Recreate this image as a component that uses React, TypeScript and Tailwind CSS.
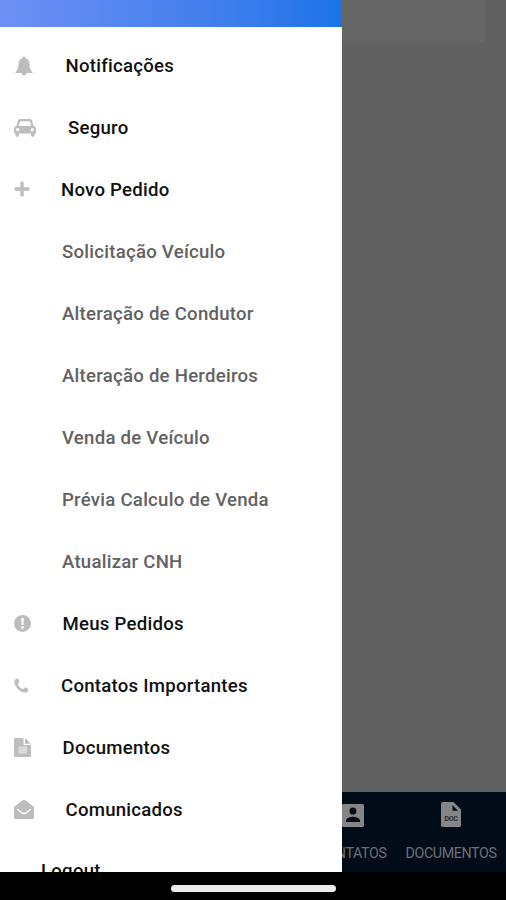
import type { ReactNode } from 'react';

interface MenuItem {
  label: string;
  icon: ReactNode;
  slot: string;
}

const BellIcon = () => (
  <svg viewBox="0 0 18 20" className="w-[18px] h-5" fill="currentColor">
    <path d="M9 .5c.8 0 1.200.5 1.300 1.400C13 2.500 14.200 4.500 14.400 7.500c.2 4.200 1 6.500 3.100 8.500v1h-6c-.2 1.500-1.200 2.500-2.500 2.500S6.700 18.500 6.500 17h-6v-1c2.100-2 2.900-4.300 3.100-8.500.2-3 1.400-5 4.100-5.600C7.800 1 8.200.5 9 .5z" />
  </svg>
);

const CarIcon = () => (
  <svg viewBox="0 0 22 18" className="w-[22px] h-[18px]" fill="currentColor">
    <path
      fillRule="evenodd"
      d="M6.500 0h9c1.300 0 2.300.8 2.700 2.100L19.500 7c1.500.3 2.500 1.400 2.500 3v4.500h-1.500V16c0 1-.7 1.800-1.700 1.800S17 17 17 16v-1.500H5V16c0 1-.7 1.800-1.700 1.800S1.500 17 1.500 16v-1.500H0V10c0-1.600 1-2.700 2.500-3l1.300-4.900C4.200.8 5.200 0 6.500 0zm.3 2.200c-.5 0-.8.2-.9.700L4.800 7h12.400l-1.100-4.100c-.1-.5-.4-.7-.9-.7zM3.700 9a1.600 1.600 0 1 0 0 3.200 1.600 1.600 0 0 0 0-3.200zm14.600 0a1.600 1.600 0 1 0 0 3.200 1.600 1.600 0 0 0 0-3.200z"
    />
  </svg>
);

const PlusIcon = () => (
  <svg viewBox="0 0 16 16" className="w-4 h-4" fill="currentColor">
    <path d="M6.300 1.300c0-.5.3-.8.800-.8h1.800c.5 0 .8.300.8.800v5h5c.5 0 .8.300.8.800v1.800c0 .5-.3.800-.8.800h-5v5c0 .5-.3.800-.8.800H7.100c-.5 0-.8-.3-.8-.8v-5h-5c-.5 0-.8-.3-.8-.8V7.100c0-.5.3-.8.800-.8h5z" />
  </svg>
);

const AlertIcon = () => (
  <svg viewBox="0 0 17 17" className="w-[17px] h-[17px]" fill="currentColor">
    <path
      fillRule="evenodd"
      d="M8.500 0a8.500 8.500 0 1 1 0 17 8.500 8.500 0 0 1 0-17zM7.200 3l.3 7h2l.3-7zm.1 8.300v2.500h2.400v-2.500z"
    />
  </svg>
);

const PhoneIcon = () => (
  <svg viewBox="0 0 15 15" className="w-[15px] h-[15px]" fill="currentColor">
    <path d="M3.300.4c.4-.1.600.1.800.5l1.300 2.600c.2.400.1.700-.2 1L4 5.700c-.2.200-.2.400-.1.700 1.100 2 2.600 3.500 4.700 4.700.3.100.5.100.7-.1l1.200-1.200c.3-.3.600-.4 1-.2l2.600 1.400c.4.200.5.400.4.800-.4 1.900-1.500 2.900-3.300 2.800C5.800 14.300.6 8.900.3 3.800.2 2 1.400.8 3.300.4z" />
  </svg>
);

const FileIcon = () => (
  <svg viewBox="0 0 17 19" className="w-[17px] h-[19px]" fill="currentColor">
    <path
      fillRule="evenodd"
      d="M1 0h8.500v6c0 .6.400 1 1 1H17v11c0 .6-.4 1-1 1H1c-.6 0-1-.4-1-1V1c0-.6.400-1 1-1zm10 .3c.5.200.7.300 1 .6l4 4c.3.300.5.600.6.900H11z"
    />
    <path d="M4.500 8.500h8.300v7H4.500z" className="text-[#dedede]" />
    <path d="M4.500 10.300h8.300v.8H4.500zm0 2.500h8.300v.8H4.500z" className="text-[#d0d0d0]" />
  </svg>
);

const MailOpenIcon = () => (
  <svg viewBox="0 0 20 19" className="w-5 h-[19px]" fill="currentColor">
    <path d="M10 0c.7 0 1.300.3 2 .8l7 5.100c.6.400 1 1 1 1.700v9.600c0 1-.8 1.800-1.800 1.800H1.800C.8 19 0 18.200 0 17.200V7.600c0-.7.4-1.300 1-1.700L8 .8c.7-.5 1.300-.8 2-.8z" />
    <path d="M3 9.200l5 3.600c1.500 1.100 2.500 1.100 4 0l5-3.600" fill="none" stroke="#fff" strokeWidth="1.500" />
  </svg>
);

const ContactIcon = () => (
  <svg viewBox="0 0 22 23" className="w-[22px] h-[23px]" fill="currentColor">
    <path
      fillRule="evenodd"
      d="M1.500 0h19c.8 0 1.500.7 1.500 1.500v20c0 .8-.7 1.500-1.500 1.500h-19C.7 23 0 22.300 0 21.500v-20C0 .7.700 0 1.500 0zM11 3.500a3.500 3.500 0 1 0 0 7 3.500 3.500 0 0 0 0-7zM4 18h14v-1.300c0-2.700-4.700-4-7-4s-7 1.300-7 4z"
    />
  </svg>
);

const DocIcon = () => (
  <span className="relative block w-5 h-[25px]">
    <svg viewBox="0 0 20 25" className="w-5 h-[25px]" fill="currentColor">
      <path fillRule="evenodd" d="M2 0h10.500L20 7.500V23c0 1.100-.9 2-2 2H2c-1.100 0-2-.9-2-2V2C0 .9.900 0 2 0zm9.500 3v5.800H17z" />
    </svg>
    <span className="absolute inset-x-0 top-[13px] text-center text-[7px] leading-[9px] font-medium text-[#15191e]">DOC</span>
  </span>
);

const topItems: MenuItem[] = [
  { label: 'Notificações', icon: <BellIcon />, slot: 'w-[51.500px] pl-px' },
  { label: 'Seguro', icon: <CarIcon />, slot: 'w-[54px]' },
  { label: 'Novo Pedido', icon: <PlusIcon />, slot: 'w-[47px] -mt-0.5' },
];

const subItems = [
  'Solicitação Veículo',
  'Alteração de Condutor',
  'Alteração de Herdeiros',
  'Venda de Veículo',
  'Prévia Calculo de Venda',
  'Atualizar CNH',
];

const bottomItems: MenuItem[] = [
  { label: 'Meus Pedidos', icon: <AlertIcon />, slot: 'w-[48.500px] -mt-px' },
  { label: 'Contatos Importantes', icon: <PhoneIcon />, slot: 'w-[47px] -mt-px' },
  { label: 'Documentos', icon: <FileIcon />, slot: 'w-[48.500px] -mt-px' },
  { label: 'Comunicados', icon: <MailOpenIcon />, slot: 'w-[51.500px] -mt-px' },
];

function MenuRow({ label, icon, slot }: MenuItem) {
  return (
    <button className="flex h-[62px] w-full shrink-0 items-center pl-3.5 text-left text-[#111111]">
      <span className={`${slot} flex shrink-0 text-[#bdbdbd]`}>{icon}</span>
      <span className="pt-0.5">{label}</span>
    </button>
  );
}

function Drawer() {
  return (
    <aside className="absolute left-0 top-0 flex h-[872px] w-[342px] flex-col overflow-hidden bg-white text-[18.6px] font-medium tracking-[0.25px]">
      <div className="h-[27px] shrink-0 bg-linear-to-r from-[#6e90f5] to-[#1a73e8]" />
      <nav className="flex flex-col pt-[7.500px]">
        {topItems.map((item) => (
          <MenuRow key={item.label} {...item} />
        ))}
        {subItems.map((label) => (
          <button key={label} className="flex h-[62px] shrink-0 items-center pt-0.5 pl-[62px] text-left text-[#626262]">
            {label}
          </button>
        ))}
        {bottomItems.map((item) => (
          <MenuRow key={item.label} {...item} />
        ))}
        <button className="flex h-[61px] shrink-0 items-center pt-0.5 pl-[41px] text-left text-[#111111]">Logout</button>
      </nav>
    </aside>
  );
}

export default function App() {
  return (
    <div className="relative flex h-[900px] w-[506px] flex-col overflow-hidden bg-[#616161] font-['Roboto',sans-serif]">
      <main className="flex-1">
        <div className="mr-[21px] h-[42px] bg-[#666666]" />
      </main>

      {/* Bottom tabs */}
      <div className="flex h-20 shrink-0 justify-end bg-[#020c18] text-[14.300px] tracking-[-0.4px] text-[#6b7076]">
        <div className="flex w-[88px] flex-col items-center pt-3">
          <span className="flex translate-x-px text-[#858585]"><ContactIcon /></span>
          <span className="mt-4 leading-5">CONTATOS</span>
        </div>
        <div className="flex w-[110px] flex-col items-center pt-2.5">
          <span className="text-[#858585]"><DocIcon /></span>
          <span className="mt-4 leading-5">DOCUMENTOS</span>
        </div>
      </div>

      {/* Home indicator */}
      <div className="flex h-7 shrink-0 items-center justify-center bg-black pt-1">
        <div className="h-[7px] w-[165px] rounded-full bg-[#ececec]" />
      </div>

      <Drawer />
    </div>
  );
}
